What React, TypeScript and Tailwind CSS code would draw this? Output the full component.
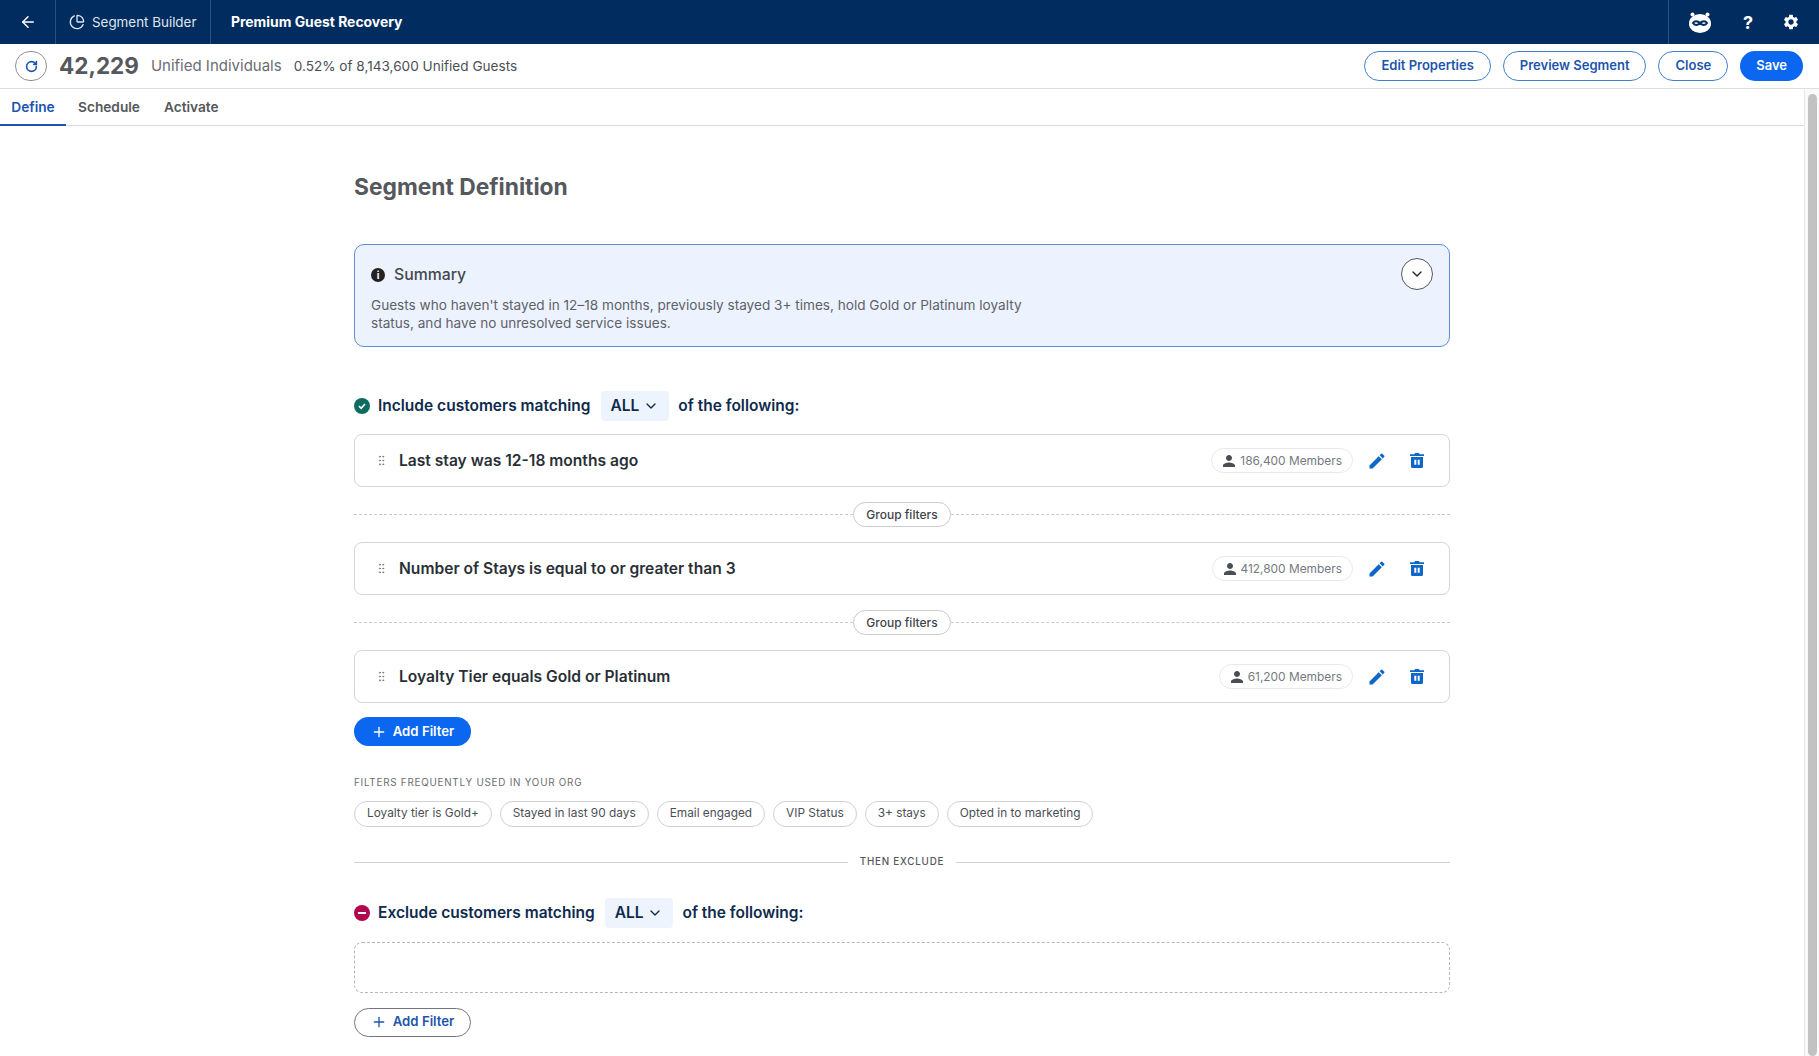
import { ArrowLeft, ChartPie, ChevronDown, GripVertical, Plus, RotateCw } from 'lucide-react'
import { MdEdit, MdPerson, MdSettings } from 'react-icons/md'

const filters = [
  { label: 'Last stay was 12-18 months ago', members: '186,400 Members' },
  { label: 'Number of Stays is equal to or greater than 3', members: '412,800 Members' },
  { label: 'Loyalty Tier equals Gold or Platinum', members: '61,200 Members' },
]

const suggestions = ['Loyalty tier is Gold+', 'Stayed in last 90 days', 'Email engaged', 'VIP Status', '3+ stays', 'Opted in to marketing']

function MascotIcon() {
  return (
    <svg width="24" height="22" viewBox="0 0 24 22" aria-hidden="true">
      <circle cx="4.5" cy="3.5" r="2" fill="#fff" />
      <circle cx="19.5" cy="3.5" r="2" fill="#fff" />
      <ellipse cx="12" cy="12.500" rx="11" ry="9.500" fill="#fff" />
      <path d="M5 12c1.500-2.500 4.500-2.500 7 0s5.500 2.500 7 0c-1.500-2.500-4.500-2.500-7 0s-5.500 2.500-7 0z" fill="none" stroke="#012c5f" strokeWidth="2" />
    </svg>
  )
}

function TrashIcon() {
  return (
    <svg width="14" height="15" viewBox="0 0 14 15" aria-hidden="true" className="ml-[23px] shrink-0">
      <path
        fill="#0e66c9"
        fillRule="evenodd"
        d="M5 0h4l.6 1.300H14v1.700H0V1.300h4.400zM1 4h12v9.500a1.500 1.500 0 0 1-1.500 1.500h-9A1.500 1.500 0 0 1 1 13.500zm3.300 2.800v5h2v-5zm3.400 0v5h2v-5z"
      />
    </svg>
  )
}

function HeaderButton({ children, solid }: { children: string; solid?: boolean }) {
  return (
    <button
      type="button"
      className={
        solid
          ? 'h-[30px] rounded-full bg-[#0b66f0] px-4 text-[13px] font-semibold text-white'
          : 'h-[30px] rounded-full border border-[#3f7fd0] bg-white px-4 text-[13px] font-semibold text-[#1c55ad]'
      }
    >
      {children}
    </button>
  )
}

function MatchHeading({ kind }: { kind: 'include' | 'exclude' }) {
  const include = kind === 'include'
  return (
    <div className="flex h-7 items-center text-[15.500px] font-semibold text-[#0e2a4d]">
      <span className={`mr-2 grid h-4 w-4 place-items-center rounded-full ${include ? 'bg-[#0d6b5f]' : 'bg-[#b0094f]'}`}>
        {include ? (
          <svg width="10" height="10" viewBox="0 0 10 10" aria-hidden="true">
            <path d="M2 5.200 4.200 7.300 8 3" fill="none" stroke="#fff" strokeWidth="1.600" />
          </svg>
        ) : (
          <span className="h-[2px] w-2 bg-white" />
        )}
      </span>
      <span>{include ? 'Include' : 'Exclude'} customers matching</span>
      <span className="mr-[9px] ml-[10px] flex h-[30px] items-center gap-1 rounded bg-[#edf4fd] px-[10px]">
        ALL <ChevronDown size={16} strokeWidth={2} />
      </span>
      <span>of the following:</span>
    </div>
  )
}

function FilterRow({ label, members }: { label: string; members: string }) {
  return (
    <div className="flex h-[53px] items-center rounded-lg border border-[#d4d6d9] bg-white pr-[25px] pl-[20px]">
      <GripVertical size={13} className="text-[#6f747b]" strokeWidth={1.500} />
      <span className="ml-[11px] flex-1 text-[15.600px] font-semibold text-[#2a2f36]">{label}</span>
      <span className="flex h-[25px] items-center gap-[2px] rounded-full border border-[#e8e9eb] pr-[10px] pl-[8px] text-[11.900px] text-[#757a82]">
        <MdPerson size={18} className="text-[#4b4f55]" />
        {members}
      </span>
      <MdEdit size={20} className="ml-[14px] shrink-0 text-[#0e66c9]" />
      <TrashIcon />
    </div>
  )
}

function GroupDivider() {
  return (
    <div className="flex h-[55px] items-center">
      <div className="flex-1 border-t border-dashed border-[#c9cbce]" />
      <span className="flex h-[25px] items-center rounded-full border border-[#c9cbce] px-3 text-[12px] font-medium text-[#3f444b]">Group filters</span>
      <div className="flex-1 border-t border-dashed border-[#c9cbce]" />
    </div>
  )
}

function AddFilter({ solid }: { solid?: boolean }) {
  return (
    <button
      type="button"
      className={`flex h-[29px] w-[117px] items-center justify-center gap-[6px] rounded-full text-[13.200px] font-semibold ${
        solid ? 'bg-[#0b66f0] text-white' : 'border border-[#73777d] bg-white text-[#1c55ad]'
      }`}
    >
      <Plus size={16} strokeWidth={2} />
      Add Filter
    </button>
  )
}

export default function App() {
  return (
    <div className="flex h-[1056px] flex-col overflow-hidden bg-white font-['Inter',sans-serif]">
      <header className="flex h-11 shrink-0 items-center bg-[#012c5f] text-white">
        <div className="grid h-full w-[56px] place-items-center border-r border-[#2a4f80]">
          <ArrowLeft size={18} strokeWidth={2} />
        </div>
        <div className="flex h-full w-[155px] items-center gap-[7px] border-r border-[#2a4f80] pl-[13px] text-[13.400px] text-[#dfe6ef]">
          <ChartPie size={16} strokeWidth={2} />
          Segment Builder
        </div>
        <div className="flex-1 pl-[20px] text-[13.900px] font-bold">Premium Guest Recovery</div>
        <div className="flex h-full w-[151px] items-center border-l border-[#2a4f80] pl-[19px]">
          <MascotIcon />
          <span className="ml-[31px] text-[18px] font-bold">?</span>
          <MdSettings size={18} className="ml-[29px]" />
        </div>
      </header>

      <div className="flex h-[45px] shrink-0 items-center border-b border-[#dcdee1] pr-[16px] pl-[15px]">
        <span className="grid h-[30px] w-[32px] place-items-center rounded-full border border-[#8d9196]">
          <RotateCw size={13} strokeWidth={3} className="text-[#1c55ad]" />
        </span>
        <span className="ml-[12px] text-[22.500px] font-bold text-[#55585c]">42,229</span>
        <span className="ml-[12px] text-[15px] text-[#6a6d72]">Unified Individuals</span>
        <span className="ml-3 text-[13.600px] text-[#4b4f55]">0.52% of 8,143,600 Unified Guests</span>
        <div className="ml-auto flex gap-3">
          <HeaderButton>Edit Properties</HeaderButton>
          <HeaderButton>Preview Segment</HeaderButton>
          <HeaderButton>Close</HeaderButton>
          <HeaderButton solid>Save</HeaderButton>
        </div>
      </div>

      <div className="flex min-h-0 flex-1">
        <div className="min-w-0 flex-1">
          <nav className="flex h-[37px] items-stretch gap-6 border-b border-[#d8dbe2] pt-[1px] text-[13.700px] font-semibold text-[#55585c]">
            <span className="-mb-px flex w-[66px] items-center justify-center border-b-2 border-[#1c55ad] text-[#1c55ad]">Define</span>
            <span className="-ml-[12px] flex items-center">Schedule</span>
            <span className="flex items-center">Activate</span>
          </nav>

          <main className="mx-auto w-[1096px]">
            <h1 className="mt-[46px] text-[22.800px] leading-[30px] font-bold text-[#55585c]">Segment Definition</h1>

            <section className="mt-[42px] h-[103px] rounded-[10px] border border-[#5b90d8] bg-[#edf3fe] px-4 pt-[17px]">
              <div className="flex h-[26px] items-center justify-between">
                <div className="flex items-center gap-[9px] text-[15.800px] font-medium text-[#44484f]">
                  <span className="grid h-[14px] w-[14px] place-items-center rounded-full bg-[#222] text-[10px] font-bold text-white">i</span>
                  Summary
                </div>
                <span className="grid h-8 w-8 translate-y-[-1px] place-items-center rounded-full border border-[#55585c] bg-white">
                  <ChevronDown size={16} className="text-[#222]" />
                </span>
              </div>
              <p className="mt-[9px] w-[680px] text-[13.600px] leading-[17.500px] text-[#5d6269]">
                Guests who haven't stayed in 12–18 months, previously stayed 3+ times, hold Gold or Platinum loyalty status, and have no unresolved service issues.
              </p>
            </section>

            <div className="mt-[45px] mb-[14px]">
              <MatchHeading kind="include" />
            </div>

            {filters.map((filter, i) => (
              <div key={filter.label}>
                {i > 0 && <GroupDivider />}
                <FilterRow label={filter.label} members={filter.members} />
              </div>
            ))}

            <div className="mt-[14px]">
              <AddFilter solid />
            </div>

            <div className="mt-[30px] text-[9.800px] tracking-[0.08em] text-[#6a6d72]">FILTERS FREQUENTLY USED IN YOUR ORG</div>

            <div className="mt-[10px] flex gap-2">
              {suggestions.map((chip) => (
                <span key={chip} className="flex h-[26px] items-center rounded-full border border-[#cfd1d4] px-3 text-[11.850px] text-[#4b4f55]">
                  {chip}
                </span>
              ))}
            </div>

            <div className="mt-[35px] flex h-[1px] items-center gap-3">
              <div className="h-[1px] flex-1 bg-[#cfd1d6]" />
              <span className="text-[9.800px] font-medium tracking-[0.08em] text-[#55585c]">THEN EXCLUDE</span>
              <div className="h-[1px] flex-1 bg-[#cfd1d6]" />
            </div>

            <div className="mt-[36px] mb-[15px]">
              <MatchHeading kind="exclude" />
            </div>

            <div className="h-[51px] rounded-lg border border-dashed border-[#b4b6b9]" />

            <div className="mt-[15px]">
              <AddFilter />
            </div>
          </main>
        </div>

        <div className="w-[15px] shrink-0 border-l border-[#e8e8e8] bg-[#fafafa] pt-[5px] pl-[3px]">
          <div className="h-full w-[9px] rounded-full bg-[#c2c2c2]" />
        </div>
      </div>
    </div>
  )
}
